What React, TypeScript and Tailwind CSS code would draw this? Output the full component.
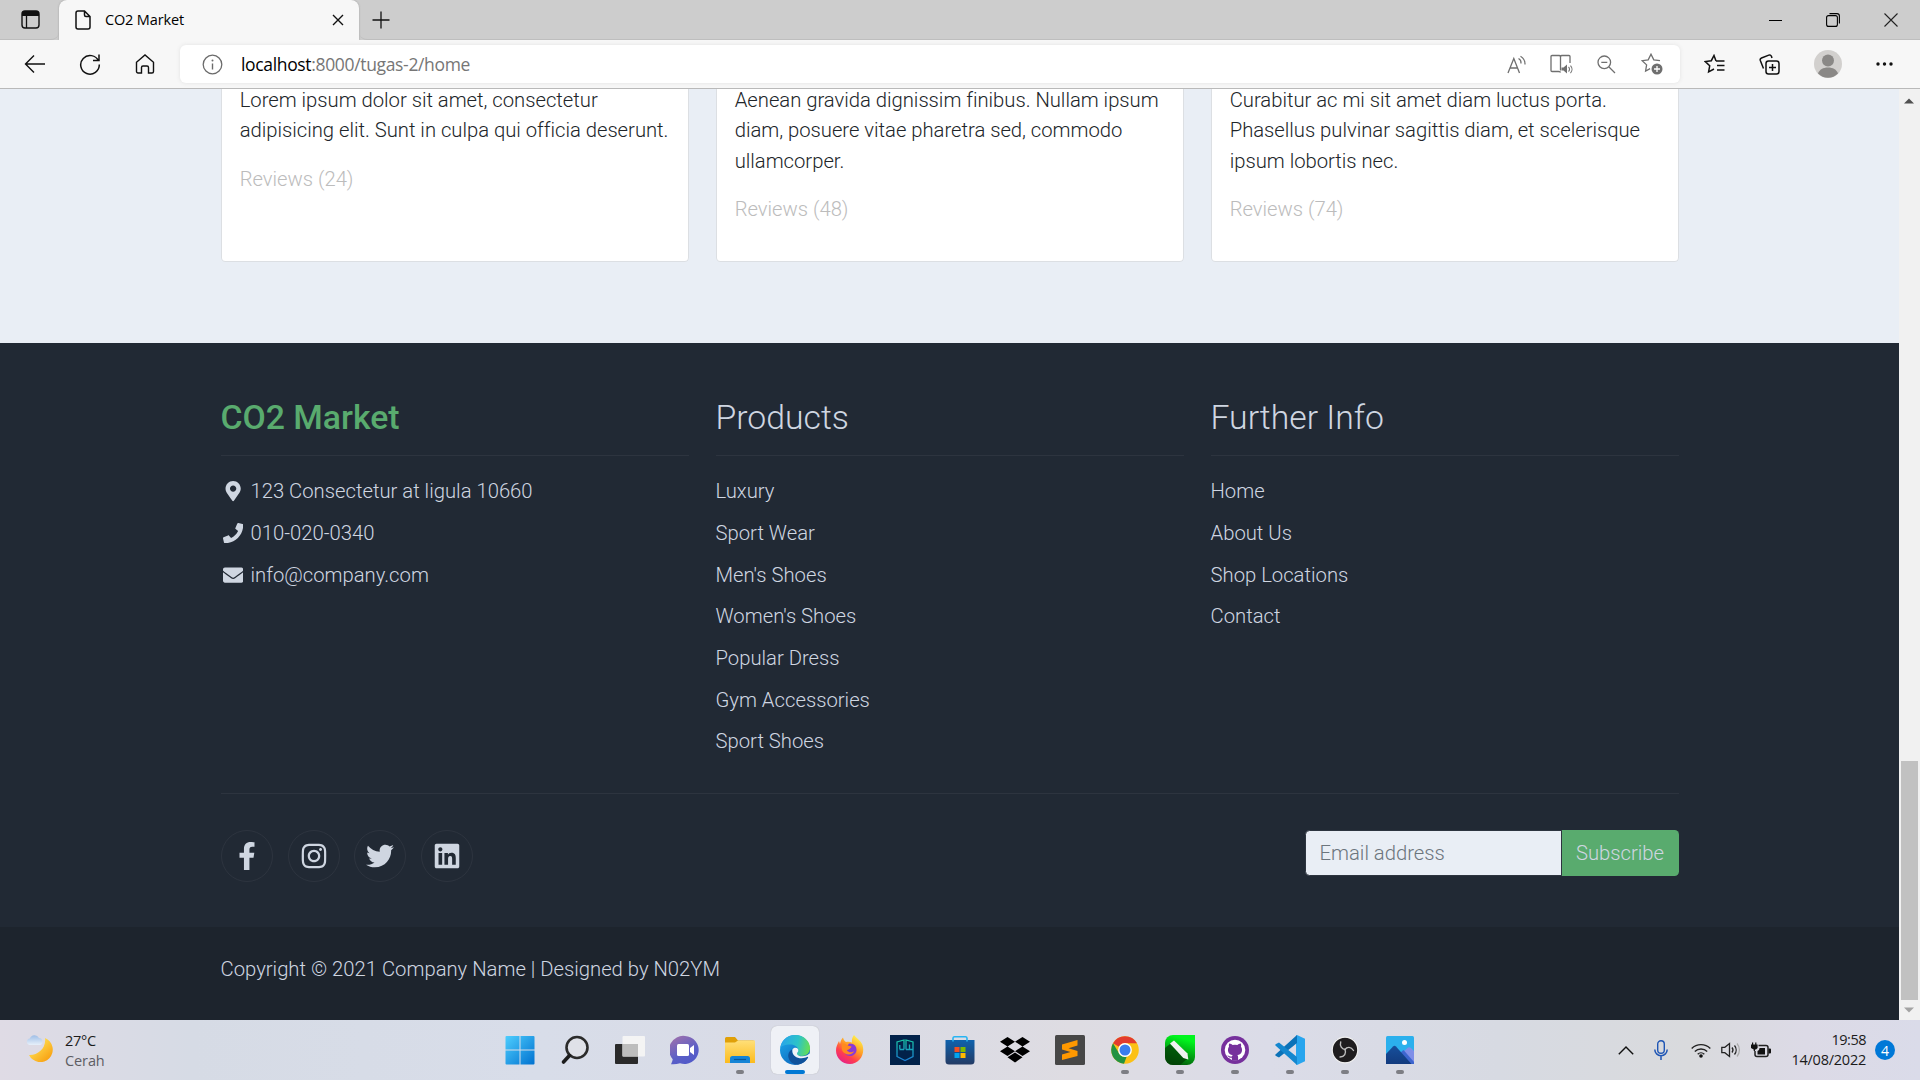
import React from 'react';
import {
  FaMapMarkerAlt, FaPhone, FaEnvelope, FaFacebookF, FaInstagram, FaTwitter, FaLinkedin,
} from 'react-icons/fa';

type P = { children?: React.ReactNode; w: number; h: number; vb?: string; className?: string };
const Svg = ({ children, w, h, vb, className = '' }: P) => (
  <svg width={w} height={h} viewBox={vb ?? `0 0 ${w} ${h}`} fill="none" className={`shrink-0 ${className}`}>
    {children}
  </svg>
);

const segoe = "font-['Open_Sans',sans-serif]";

function TitleBar() {
  return (
    <div className="flex h-10 shrink-0 bg-[#cdcdcd]">
      <div className="flex w-[59px] items-center justify-center rounded-br-lg border-b border-[#bebebe] pl-px">
        <Svg w={19} h={19} className="text-[#111]">
          <rect x="1" y="1" width="17" height="17" rx="3" stroke="currentColor" strokeWidth="1.4" />
          <path d="M1 3.500a2.500 2.500 0 0 1 2.500-2.500h12A2.500 2.500 0 0 1 18 3.500V6H1z" fill="currentColor" />
          <path d="M5.500 6v12" stroke="currentColor" strokeWidth="1.3" />
        </Svg>
      </div>
      <div className="flex w-[300px] items-center rounded-t-lg bg-[#f7f7f7] pl-4 shadow-[0_0_2px_#999]">
        <Svg w={16} h={20}>
          <path d="M3 1h6.500L15 6.500V17a2 2 0 0 1-2 2H3a2 2 0 0 1-2-2V3a2 2 0 0 1 2-2zM9.500 1v4a1.500 1.500 0 0 0 1.500 1.500h4" stroke="#111" strokeWidth="1.5" />
        </Svg>
        <span className={`-mt-px ml-[14px] text-[14.5px] tracking-[-0.15px] text-black ${segoe}`}>CO2 Market</span>
        <Svg w={12} h={12} className="mr-[15px] ml-auto">
          <path d="M1 1l10 10M11 1L1 11" stroke="#111" strokeWidth="1.4" />
        </Svg>
      </div>
      <div className="flex flex-1 items-center rounded-bl-lg border-b border-[#bebebe] pl-[13px]">
        <Svg w={18} h={18}><path d="M9 0.500v17M0.500 9h17" stroke="#111" strokeWidth="1.3" /></Svg>
        <div className="mr-[22px] ml-auto flex items-center gap-11">
          <Svg w={13} h={14}><path d="M0 7.500h13" stroke="#000" /></Svg>
          <Svg w={14} h={14}>
            <rect x="0.600" y="2.600" width="10.800" height="10.800" rx="2" stroke="#000" strokeWidth="1.1" />
            <path d="M3.500 .6h7.500a2.400 2.400 0 0 1 2.400 2.400v7.500" stroke="#000" strokeWidth="1.100" />
          </Svg>
          <Svg w={14} h={14}><path d="M.5.5l13 13M13.500.5l-13 13" stroke="#222" strokeWidth="1.100" /></Svg>
        </div>
      </div>
    </div>
  );
}

function Toolbar() {
  return (
    <div className="flex h-12 shrink-0 items-center bg-[#f7f7f7]">
      <Svg w={22} h={20} className="ml-6"><path d="M21 10H1.500M10 1.500L1.500 10l8.500 8.500" stroke="#111" strokeWidth="1.4" /></Svg>
      <Svg w={22} h={22} className="ml-[33px]">
        <path d="M19.500 8A9.300 9.300 0 1 0 20.300 11.500M20 1.500V7.500h-6" stroke="#111" strokeWidth="1.5" />
      </Svg>
      <Svg w={20} h={20} className="ml-[34px]">
        <path d="M1.500 8.200L10 1l8.500 7.200V17.500a1.500 1.500 0 0 1-1.500 1.500h-3.500v-5.500a1.500 1.500 0 0 0-1.500-1.500h-4a1.500 1.500 0 0 0-1.500 1.500V19H3a1.500 1.500 0 0 1-1.500-1.500z" stroke="#111" strokeWidth="1.400" />
      </Svg>
      <div className="ml-[25px] flex h-[38px] w-[1500px] items-center rounded-md bg-white pl-[22px] shadow-[0_0_4px_#e2e2e2]">
        <Svg w={21} h={21}>
          <circle cx="10.500" cy="10.500" r="9.300" stroke="#6b6b6b" strokeWidth="1.300" />
          <path d="M10.500 9.500v6" stroke="#6b6b6b" strokeWidth="1.400" />
          <circle cx="10.500" cy="6.500" r="1" fill="#6b6b6b" />
        </Svg>
        <span className={`ml-[18px] text-[17.5px] tracking-[-0.34px] text-[#767676] ${segoe}`}>
          <span className="text-black">localhost</span>:8000/tugas-2/home
        </span>
        <div className="mr-[17px] ml-auto flex items-center text-[#6f6f6f]">
          <Svg w={20} h={19}>
            <path d="M1 18L6.800 3.500 12.500 18M3 13h7.600" stroke="currentColor" strokeWidth="1.300" />
            <path d="M11.500 3.500a5 5 0 0 1 2.500 5M13.500 1.200a9 9 0 0 1 4.500 8.300" stroke="currentColor" strokeWidth="1.200" />
          </Svg>
          <Svg w={23} h={20} className="ml-[23px]">
            <path d="M10.500 2v14.500M10.500 2.500a1.500 1.500 0 0 0-1.500-1H2A1 1 0 0 0 1 2.500v14a1 1 0 0 0 1 1h6.500c1 0 2 .3 2 1M10.500 2.500a1.500 1.500 0 0 1 1.500-1h7a1 1 0 0 1 1 1V9" stroke="currentColor" strokeWidth="1.300" />
            <path d="M11.500 13.500h2l3.500-3v9l-3.500-3h-2z" fill="currentColor" />
            <path d="M18.500 13a3 3 0 0 1 0 4.500M20.500 11.500a5.500 5.500 0 0 1 0 7.500" stroke="currentColor" strokeWidth="1.100" />
          </Svg>
          <Svg w={19} h={19} className="ml-6">
            <circle cx="7.300" cy="7.300" r="6.300" stroke="currentColor" strokeWidth="1.300" />
            <path d="M12 12l6 6M4.300 7.300h6" stroke="currentColor" strokeWidth="1.300" />
          </Svg>
          <Svg w={22} h={22} className="ml-[25px]">
            <path d="M19 7.700l-6.200-.9L10 1.200 7.200 6.800l-6 .9 4.400 4.200-1 6.100 4.500-2.300" stroke="currentColor" strokeWidth="1.300" />
            <circle cx="16" cy="16" r="5.500" fill="currentColor" />
            <path d="M16 13v6M13 16h6" stroke="#fff" strokeWidth="1.300" />
          </Svg>
        </div>
      </div>
      <div className="ml-6 flex items-center text-[#111]">
        <Svg w={21} h={20}>
          <path d="M12 7L10 1.500 7.300 6.700l-6 .9 4.400 4.200-1.100 6L10 15" stroke="currentColor" strokeWidth="1.500" />
          <path d="M12 7h8.500M13 11.500h7.500M13 16h7.500" stroke="currentColor" strokeWidth="1.500" />
        </Svg>
        <Svg w={21} h={21} className="ml-[34px]">
          <rect x="7" y="7" width="13" height="13" rx="2.500" stroke="currentColor" strokeWidth="1.500" />
          <path d="M13.500 10v7M10 13.500h7M4.500 14.500L1.300 6.500A2 2 0 0 1 2.500 4l7.300-2.900a2 2 0 0 1 2.600 1.200L13 4" stroke="currentColor" strokeWidth="1.500" />
        </Svg>
        <Svg w={28} h={28} className="ml-[34px]">
          <circle cx="14" cy="14" r="14" fill="#d2d0ce" />
          <circle cx="14" cy="10.500" r="6" fill="#8a8886" />
          <path d="M4 23.500c1.500-4 5-6 10-6s8.500 2 10 6A14 14 0 0 1 4 23.500z" fill="#8a8886" />
        </Svg>
        <Svg w={17} h={4} className="ml-[34px]">
          <circle cx="2" cy="2" r="1.700" fill="currentColor" /><circle cx="8.500" cy="2" r="1.700" fill="currentColor" /><circle cx="15" cy="2" r="1.700" fill="currentColor" />
        </Svg>
      </div>
    </div>
  );
}

const cards = [
  { lines: ['Lorem ipsum dolor sit amet, consectetur', 'adipisicing elit. Sunt in culpa qui officia deserunt.'], reviews: 24 },
  { lines: ['Aenean gravida dignissim finibus. Nullam ipsum', 'diam, posuere vitae pharetra sed, commodo', 'ullamcorper.'], reviews: 48 },
  { lines: ['Curabitur ac mi sit amet diam luctus porta.', 'Phasellus pulvinar sagittis diam, et scelerisque', 'ipsum lobortis nec.'], reviews: 74 },
];

function FooterColumn({ title, items }: { title: string; items: string[] }) {
  return (
    <div>
      <h2 className="border-b border-[#2d343f] pt-px pb-4 text-[33.75px] leading-[40.5px]">{title}</h2>
      <ul className="mt-[15.300px]">
        {items.map((t) => <li key={t} className="py-[5.625px]">{t}</li>)}
      </ul>
    </div>
  );
}

function Contact({ Icon, text }: { Icon: React.ElementType; text: string }) {
  return (
    <li className="flex items-center py-[5.625px]">
      <span className="flex w-[25.3px] justify-center"><Icon size={20.25} /></span>
      <span className="ml-[4.700px]">{text}</span>
    </li>
  );
}

function Page() {
  return (
    <div className="flex w-[1899px] flex-col overflow-hidden font-['Roboto',sans-serif] text-[20.25px] leading-[30.375px] font-light">
      <section className="h-[254px] shrink-0 bg-[#e9eef5] pl-[221px]">
        <div className="grid w-[1458px] grid-cols-3 gap-[27px]">
          {cards.map((c) => (
            <div key={c.reviews} className="h-[173px] overflow-hidden rounded-b-[4.5px] border border-t-0 border-[#dcdfe3] bg-white px-[17.700px] tracking-[-0.02px] text-[#212529]">
              <div className="-mt-[4px] whitespace-nowrap">
                {c.lines.map((l) => <div key={l}>{l}</div>)}
              </div>
              <p className="mt-[18.300px] text-[#bcbcbc]">Reviews ({c.reviews})</p>
            </div>
          ))}
        </div>
      </section>
      <footer className="flex h-[584px] shrink-0 flex-col bg-[#212934] pt-[54px] pl-[220.5px] text-[#cfd6e1]">
        <div className="grid h-[396px] w-[1458px] grid-cols-3 gap-[27px]">
          <div>
            <h2 className="border-b border-[#2d343f] pt-px pb-4 text-[33.75px] leading-[40.5px] font-medium text-[#59ab6e]">CO2 Market</h2>
            <ul className="mt-[15.300px]">
              <Contact Icon={FaMapMarkerAlt} text="123 Consectetur at ligula 10660" />
              <Contact Icon={FaPhone} text="010-020-0340" />
              <Contact Icon={FaEnvelope} text="info@company.com" />
            </ul>
          </div>
          <FooterColumn title="Products" items={['Luxury', 'Sport Wear', "Men's Shoes", "Women's Shoes", 'Popular Dress', 'Gym Accessories', 'Sport Shoes']} />
          <FooterColumn title="Further Info" items={['Home', 'About Us', 'Shop Locations', 'Contact']} />
        </div>
        <div className="flex w-[1458px] justify-between border-t border-[#2d343f] pt-9">
          <ul className="ml-[0.500px] flex gap-[14.500px]">
            {[FaFacebookF, FaInstagram, FaTwitter, FaLinkedin].map((Icon, i) => (
              <li key={i} className="flex size-[52px] items-center justify-center rounded-full border border-[#2d343f]">
                <Icon size={28} />
              </li>
            ))}
          </ul>
          <div className="flex h-[46px]">
            <div className="flex w-[257px] items-center rounded-l-[4.500px] border border-[#2d343f] bg-[#e9eef5] pl-[14px] text-[#6c757d]">Email address</div>
            <div className="flex w-[117px] items-center justify-center rounded-r-[4.500px] bg-[#59ab6e]">Subscribe</div>
          </div>
        </div>
      </footer>
      <div className="h-[93px] shrink-0 bg-[#1d242d] pt-[27px] pl-[220.5px] text-[#cfd6e1]">
        Copyright © 2021 Company Name | Designed by N02YM
      </div>
    </div>
  );
}

function ScrollBar() {
  return (
    <div className="flex w-[21px] flex-col items-center bg-[#f1f1f1]">
      <Svg w={10} h={6} className="mt-[9px] -ml-px"><path d="M0 5.500L5 .5l5 5z" fill="#505050" /></Svg>
      <div className="mt-[657px] h-[239px] w-[17px] bg-[#c1c1c1]" />
      <Svg w={10} h={6} className="mt-[7px] -ml-px"><path d="M0 .5l5 5 5-5z" fill="#a3a3a3" /></Svg>
    </div>
  );
}

const apps: { icon: React.ReactNode; dot?: boolean; active?: boolean }[] = [
  { icon: (
    <Svg w={30} h={30}>
      <defs><linearGradient id="win" x1="0" y1="0" x2="30" y2="30" gradientUnits="userSpaceOnUse"><stop stopColor="#4fd0ff" /><stop offset="1" stopColor="#0070cf" /></linearGradient></defs>
      <path d="M.5 2a1 1 0 0 1 1-1H14.500v13.500H.5zM15.500 1h13a1 1 0 0 1 1 1v12.500h-14zM.5 15.500h14V29.500h-13a1 1 0 0 1-1-1zM15.500 15.500h14v13a1 1 0 0 1-1 1h-13z" fill="url(#win)" />
    </Svg>) },
  { icon: (
    <Svg w={30} h={30}>
      <circle cx="17" cy="12.500" r="10.500" stroke="#2b2b2b" strokeWidth="2.600" fill="#dfe1e8" />
      <path d="M9.500 20.500L3.500 27" stroke="#1c1c1c" strokeWidth="3.600" strokeLinecap="round" />
    </Svg>) },
  { icon: (
    <Svg w={30} h={30}>
      <rect x="0" y="9" width="23" height="20" rx="1" fill="#2a2a2a" />
      <rect x="7.500" y="1" width="22.500" height="20.500" rx="1" fill="#f4f4f4" />
      <rect x="7.500" y="9" width="15.500" height="12.500" fill="#bdbdbd" />
    </Svg>) },
  { icon: (
    <Svg w={30} h={30}>
      <defs><linearGradient id="chat" x1="5" y1="2" x2="20" y2="30" gradientUnits="userSpaceOnUse"><stop stopColor="#9a6fae" /><stop offset=".6" stopColor="#5b5fc7" /><stop offset="1" stopColor="#5059c9" /></linearGradient></defs>
      <path d="M15 1a14 14 0 1 1-5 27.200C7 29.200 4 29.500 1 29.200c.8-1.600 1.500-3.200 1.700-5A14 14 0 0 1 15 1z" fill="url(#chat)" />
      <rect x="7" y="9" width="12" height="12" rx="1.500" fill="#fff" />
      <path d="M20 13l4-3v10l-4-3z" fill="#fff" />
    </Svg>) },
  { dot: true, icon: (
    <Svg w={30} h={30}>
      <defs><linearGradient id="fold" x1="0" y1="5" x2="0" y2="28" gradientUnits="userSpaceOnUse"><stop stopColor="#ffe07a" /><stop offset="1" stopColor="#fcbb1c" /></linearGradient></defs>
      <path d="M0 3.500a1.500 1.500 0 0 1 1.500-1.500H10l3 3.500h15a2 2 0 0 1 2 2v5H0z" fill="#e0a008" />
      <path d="M0 7.500h10l3-2h17v22.500H0z" fill="url(#fold)" />
      <path d="M5 28V23.500a2.500 2.500 0 0 1 2.500-2.500h15A2.500 2.500 0 0 1 25 23.500v4.500z" fill="#1584d6" />
      <path d="M9 24.500h12" stroke="#0a5798" strokeWidth="1.200" />
    </Svg>) },
  { active: true, icon: (
    <Svg w={30} h={30}>
      <defs>
        <linearGradient id="e1" x1="2" y1="6" x2="30" y2="12" gradientUnits="userSpaceOnUse"><stop stopColor="#2aa6e8" /><stop offset=".55" stopColor="#2cc3c8" /><stop offset="1" stopColor="#67df52" /></linearGradient>
        <linearGradient id="e2" x1="0" y1="10" x2="14" y2="30" gradientUnits="userSpaceOnUse"><stop stopColor="#1b9de2" /><stop offset="1" stopColor="#0f6cc0" /></linearGradient>
      </defs>
      <circle cx="15" cy="15" r="15" fill="url(#e2)" />
      <path d="M.3 13C1.500 5 7.500 0 15 0c9 0 15 6.200 15 13 0 5-3.800 8-8.200 8-3 0-5.300-.9-5.300-2 0-.9 1.700-1.300 1.700-4 0-3-3.500-5.500-7.800-5.500C5 9.500 1.500 11 .3 13z" fill="url(#e1)" />
      <path d="M12 14.500c-3.500 2-4.500 5.500-3.200 9 1.500 4 5 6.200 9.200 6.200 4.500-.7 8.200-3.700 10-7.200.4-.9-.3-1.300-1-.9C20 25.500 11.500 22 12 14.500z" fill="#10529b" />
      <path d="M12.500 14.500c.8-2 4-2.500 5.300-.7.800 1.200.6 2.600-.3 3.700-1.500 1.800.7 3.800 5 3.800 3.200 0 5.200-1 6.700-2.800L31 20l-2.700 2.500c-.4-.9-.8-.8-1.300-.5-1.500.7-3 1.200-5.500 1.200-5.500 0-10-3.700-9-8.700z" fill="#f0f3f8" />
    </Svg>) },
  { icon: (
    <Svg w={30} h={30}>
      <defs>
        <linearGradient id="f1" x1="24" y1="3" x2="7" y2="28" gradientUnits="userSpaceOnUse"><stop stopColor="#fff04a" /><stop offset=".4" stopColor="#ff9a25" /><stop offset=".7" stopColor="#ff3e4e" /><stop offset="1" stopColor="#e5208a" /></linearGradient>
      </defs>
      <path d="M19 0c2 3 7 5.500 8.500 10 3 9.500-3.500 19-12.500 19C7 29 1 23 1 15.500c0-4 1.500-6.500 3-9.500l1 3c.5-3 1.500-5 3-6.500.5 2 1.500 3.500 3 4.500 2-.5 4.500-.5 6 .5-.5-3 .5-5.500 2-7.500z" fill="url(#f1)" />
      <path d="M14 8.500c5-.5 8 3 7.500 7-.4 3.500-3.500 5.500-6.500 5.500-4 0-6.500-3-6-6.500l4 .5 3-2.500-4-1z" fill="#8a3ad6" />
      <path d="M7 9c2-1.500 4 0 5.500 1.500l4 1c-.5 2.500-4.500 2-4.500 4 2 2.500 5 2 7 .5-1 4.500-10 5-12-1C6.500 13 6.500 11 7 9z" fill="#ff8a1e" />
    </Svg>) },
  { icon: (
    <Svg w={30} h={30}>
      <defs><linearGradient id="hx" x1="0" y1="4" x2="0" y2="27" gradientUnits="userSpaceOnUse"><stop stopColor="#19c9a4" /><stop offset="1" stopColor="#1a78d6" /></linearGradient></defs>
      <rect width="30" height="30" fill="#02224a" />
      <path d="M14 14.500H9.500M7 22V7l7-2v9.500M9.800 10V14M16 14.500V5l7 2v14.500L15 25.500 7 21.500M16 14.500h7M19.500 9.500v5" stroke="url(#hx)" strokeWidth="1.300" />
    </Svg>) },
  { icon: (
    <Svg w={30} h={30}>
      <defs><linearGradient id="st" x1="0" y1="5" x2="0" y2="30" gradientUnits="userSpaceOnUse"><stop stopColor="#0f62ad" /><stop offset="1" stopColor="#243a63" /></linearGradient></defs>
      <path d="M0.500 5h29v21a3.500 3.500 0 0 1-3.500 3.500H4A3.500 3.500 0 0 1 .5 26z" fill="url(#st)" />
      <path d="M8 6.500V3a1.500 1.500 0 0 1 1.500-1.300h11A1.500 1.500 0 0 1 22 3v3.500" stroke="#27b4f2" strokeWidth="1.600" />
      <path d="M9.500 12h5v5h-5z" fill="#f25022" /><path d="M15.500 12h5v5h-5z" fill="#7fba00" />
      <path d="M9.500 18h5v5h-5z" fill="#00a4ef" /><path d="M15.500 18h5v5h-5z" fill="#ffb900" />
    </Svg>) },
  { icon: (
    <Svg w={30} h={30}>
      <path d="M7.500 2L15 6.700 7.500 11.400 0 6.700zM22.500 2L30 6.700l-7.500 4.700L15 6.700zM7.500 11.400L15 16.200 7.500 20.900 0 16.200zM22.500 11.400L30 16.200l-7.500 4.700-7.500-4.700zM7.500 22.300L15 17.600l7.500 4.700L15 27.500z" fill="#000" />
    </Svg>) },
  { icon: (
    <Svg w={30} h={30}>
      <rect width="30" height="30" rx="1.500" fill="#474747" />
      <path d="M7 9.500L22.500 5v5.500L13.500 13.300l9 2.700v5L7 25v-5.500l8.500-2.600L7 14.500z" fill="#ff9800" />
    </Svg>) },
  { dot: true, icon: (
    <Svg w={30} h={30}>
      <circle cx="15" cy="15" r="13.800" fill="#fbc116" />
      <path d="M15 1.200A13.800 13.800 0 0 1 27 8.200H15a6.800 6.800 0 0 0-6 3.500L3 8.200a13.800 13.800 0 0 1 12-7z" fill="#e33b2e" />
      <path d="M3 8.200L9.200 18.500a6.800 6.800 0 0 0 7.500 3L14 28.800A13.800 13.800 0 0 1 3 8.200z" fill="#229342" />
      <circle cx="15" cy="15" r="6.900" fill="#fff" /><circle cx="15" cy="15" r="5.500" fill="#3b7ded" />
    </Svg>) },
  { dot: true, icon: (
    <Svg w={30} h={30}>
      <defs><linearGradient id="cd" x1="20" y1="4" x2="12" y2="30" gradientUnits="userSpaceOnUse"><stop stopColor="#00f61e" /><stop offset="1" stopColor="#045a0a" /></linearGradient></defs>
      <path d="M8 0h22v22a8 8 0 0 1-8 8H8a8 8 0 0 1-8-8V8a8 8 0 0 1 8-8z" fill="url(#cd)" />
      <path d="M0 22V13l5-4 17 15-7 6H8a8 8 0 0 1-8-8z" fill="#023d05" opacity=".75" />
      <path d="M5 8.500L9 5.500l13.500 13 .8 6-5-1.500z" fill="#f1f1f1" />
    </Svg>) },
  { dot: true, icon: (
    <Svg w={30} h={30}>
      <circle cx="15" cy="15" r="14" fill="#76309c" /><circle cx="15" cy="15" r="10.300" fill="#fff" />
      <path d="M9.200 8.500c1.500 0 2.700.8 3.400 1.400a11 11 0 0 1 4.800 0c.7-.6 1.900-1.400 3.400-1.400.5 1.500.4 2.500.2 3.200 2 2.500 1.300 8-3.700 8.300.7.800.8 1.600.8 2.500V25a10.300 10.300 0 0 1-6.200 0v-2.300c-3 .6-3.500-1.500-4.700-2.200 1.800-.4 2 1.500 4.800 1 0-.6.300-1.100.7-1.500-5-.3-5.700-5.800-3.700-8.300-.2-.7-.3-1.700.2-3.200z" fill="#76309c" />
    </Svg>) },
  { dot: true, icon: (
    <Svg w={30} h={30}>
      <path d="M22 0l8 3.700v22.600L22 30l-1-1V1z" fill="#28a5ee" />
      <path d="M22 0v8L4 22.500l-3-1.500a1.200 1.200 0 0 1 0-2z" fill="#0b72b8" />
      <path d="M22 30v-8L4 7.500 1 9a1.200 1.200 0 0 0 0 2z" fill="#1487cf" />
    </Svg>) },
  { dot: true, icon: (
    <Svg w={30} h={30}>
      <circle cx="15" cy="15" r="12.800" fill="#1f1d1f" stroke="#f0f0f0" strokeWidth="1.200" />
      <g stroke="#bdbdbd" strokeWidth="1.400" strokeLinecap="round">
        <path d="M15 14.500c-3-.5-5.500-3.500-4.300-7.500" />
        <path d="M15 14.500c2-2.800 6-3.200 8.500 1" />
        <path d="M15 14.500c1.500 3.500-.5 7.500-5 7.500" />
      </g>
    </Svg>) },
  { dot: true, icon: (
    <Svg w={28} h={28}>
      <defs><linearGradient id="ph" x1="0" y1="10" x2="0" y2="28" gradientUnits="userSpaceOnUse"><stop stopColor="#164f9c" /><stop offset="1" stopColor="#123b7e" /></linearGradient></defs>
      <rect width="28" height="28" rx="1.500" fill="#2bb0ed" />
      <path d="M16 17l6-5.500q1.500-.8 3 .5l3 3V28H16z" fill="#7f8fe8" />
      <path d="M14 17l3.500-3 10.500 12v2H14z" fill="#3d66cf" />
      <path d="M0 18l7-7.500q1.500-1.300 3 0L25.500 28H0z" fill="url(#ph)" />
      <circle cx="18.500" cy="6.500" r="2.500" fill="#fff" />
    </Svg>) },
];

function Taskbar() {
  return (
    <div className="flex h-[60px] shrink-0 bg-[linear-gradient(90deg,#dfdbe5_0%,#d6dbe5_10%,#d8dde9_28%,#d9dbe6_42%,#dedce2_56%,#dbdce8_66%,#d7dae2_78%,#d9dadd_88%,#dcdae6_94%,#dadbe9_100%)] text-[#1b1b1b]">
      <div className="flex w-[492px] items-start pt-[14px] pl-[26px]">
        <Svg w={28} h={29}>
          <defs>
            <linearGradient id="mo" x1="8" y1="10" x2="24" y2="28" gradientUnits="userSpaceOnUse"><stop stopColor="#ffe054" /><stop offset="1" stopColor="#f79a0b" /></linearGradient>
            <linearGradient id="cl" x1="0" y1="1" x2="0" y2="12" gradientUnits="userSpaceOnUse"><stop stopColor="#9dbde6" /><stop offset="1" stopColor="#eef5fc" /></linearGradient>
          </defs>
          <path d="M19 4a12.500 12.500 0 1 1-16 17C12 21.500 20.500 14 19 4z" fill="url(#mo)" />
          <path d="M3.500 11a3.300 3.300 0 0 1 .3-6.500A5 5 0 0 1 13 4a3.700 3.700 0 0 1 1.500 7z" fill="url(#cl)" />
        </Svg>
        <div className={`-mt-[3px] ml-[11px] text-[14.500px] leading-5 ${segoe}`}>
          <div className="tracking-[-0.3px]">27°C</div>
          <div className="tracking-[-0.1px] text-[#5d5d63]">Cerah</div>
        </div>
      </div>
      <div className="flex">
        {apps.map((a, i) => (
          <div key={i} className="flex w-[55px] justify-center pt-1.5">
            <div className={a.active ? 'flex h-12 w-12 flex-col items-center rounded-md bg-[#eff1f6] pt-[9px] shadow-[0_0_1px_#aaa]' : 'flex h-12 w-12 flex-col items-center pt-[9px]'}>
              <div className="flex h-[30px] items-center">{a.icon}</div>
              {a.active && <div className="mt-[5px] h-1 w-5 rounded-full bg-[#0078d4]" />}
              {a.dot && <div className="mt-[5px] h-1 w-2 rounded-full bg-[#7d7e84]" />}
            </div>
          </div>
        ))}
      </div>
      <div className="mr-[25px] ml-auto flex items-center">
        <Svg w={16} h={9}><path d="M.8 8.200L8 1l7.200 7.200" stroke="#111" strokeWidth="1.400" /></Svg>
        <Svg w={14} h={20} className="ml-5">
          <rect x="3.700" y=".8" width="6.600" height="12.400" rx="3.300" stroke="#1f56b5" strokeWidth="1.400" />
          <path d="M.8 9.500a6.200 6.200 0 0 0 12.400 0M7 15.800V20" stroke="#1f56b5" strokeWidth="1.500" />
        </Svg>
        <Svg w={20} h={15} className="ml-[23px]">
          <path d="M.7 5.500a13 13 0 0 1 18.600 0M3.800 8.500a8.800 8.800 0 0 1 12.400 0M6.700 11.200a4.700 4.700 0 0 1 6.600 0" stroke="#222" strokeWidth="1.400" />
          <circle cx="10" cy="13" r="1.800" fill="#111" />
        </Svg>
        <Svg w={20} h={16} className="ml-2.5">
          <path d="M.8 5.300h3L8.500 1.500v13L3.800 10.700h-3z" stroke="#222" strokeWidth="1.300" />
          <path d="M11 5.500a4 4 0 0 1 0 5M13.500 3.500a7 7 0 0 1 0 9" stroke="#222" strokeWidth="1.300" />
          <path d="M16 1.500a10 10 0 0 1 0 13" stroke="#aaa" strokeWidth="1.200" />
        </Svg>
        <Svg w={20} h={16} className="ml-2.5">
          <path d="M7.500 3.500H15a2 2 0 0 1 2 2v7a2 2 0 0 1-2 2H6a2 2 0 0 1-2-2V9" stroke="#222" strokeWidth="1.500" />
          <path d="M8.500 6H14v6.500H6.500V9c1.200-.5 2-1.500 2-3zM17.500 6.500h1.500a1 1 0 0 1 1 1v3a1 1 0 0 1-1 1h-1.500zM0 2.500h1V.500h1.200v2h2V.500h1.200v2h1.200V6L5 7.500H4V9H2.700V7.500L0 6z" fill="#111" />
        </Svg>
        <div className={`-mt-px ml-[18px] w-[77px] text-right text-[14.500px] leading-5 tracking-[-0.240px] whitespace-nowrap ${segoe}`}>
          <div className="tracking-[-0.5px]">19:58</div>
          <div>14/08/2022</div>
        </div>
        <div className={`ml-[9px] flex size-5 items-center justify-center rounded-full bg-[#0078d7] text-[14px] text-white ${segoe}`}>4</div>
      </div>
    </div>
  );
}

export default function App() {
  return (
    <div className="flex h-[1080px] w-[1920px] flex-col overflow-hidden bg-white">
      <TitleBar />
      <Toolbar />
      <div className="h-px shrink-0 bg-[#b9b9b9]" />
      <div className="flex h-[931px] shrink-0">
        <Page />
        <ScrollBar />
      </div>
      <Taskbar />
    </div>
  );
}
